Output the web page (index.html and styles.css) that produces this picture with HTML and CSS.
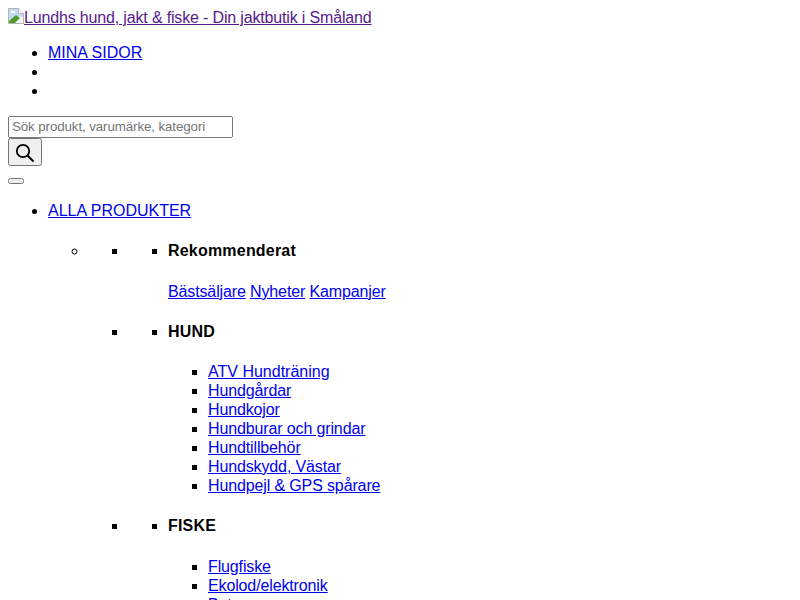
FILE: index.html
```html
<!DOCTYPE html>
<html lang="sv">
<head>
  <meta charset="UTF-8">
  <meta name="viewport" content="width=device-width, initial-scale=1.0">
  <title>Lundhs hund, jakt &amp; fiske</title>
  <link rel="stylesheet" href="styles.css">
</head>
<body>
  <div class="logo">
    <a class="logo-link" href="#logo"><svg class="broken-img" width="16" height="16" viewBox="0 0 16 16"><path d="M0.5 0.5H10.5L15.5 5.5V15.5H0.5Z" fill="#f4f4f4" stroke="#b4b4b4"/><path d="M1 1H10V6H15V9L9 8L1 13Z" fill="#c5daf6"/><path d="M3 3H7V5H3Z" fill="#fff"/><path d="M1 15V13L8 7L12 10L7 15Z" fill="#4f9a2c"/><path d="M10.5 0.5V5.5H15.5" fill="#fff" stroke="#b4b4b4"/></svg>Lundhs hund, jakt &amp; fiske - Din jaktbutik i Småland</a>
  </div>

  <ul class="top-links">
    <li><a class="caps" href="#mina-sidor">MINA SIDOR</a></li>
    <li></li>
    <li></li>
  </ul>

  <form class="search">
    <input class="search-input" type="text" placeholder="Sök produkt, varumärke, kategori">
    <button class="search-btn" type="button">
      <svg width="20" height="20" viewBox="0 0 20 20" fill="none" stroke="#000"><circle cx="8" cy="8" r="6.2" stroke-width="1.8"/><path d="M12.5 12.5L18.5 18.5" stroke-width="2"/></svg>
    </button>
  </form>

  <button class="menu-btn" type="button"></button>

  <ul class="nav">
    <li>
      <a class="caps" href="#alla">ALLA PRODUKTER</a>
      <ul>
        <li>
          <ul>
            <li>
              <ul>
                <li>
                  <h4>Rekommenderat</h4>
                  <a href="#bast">Bästsäljare</a>
                  <a href="#nyheter">Nyheter</a>
                  <a href="#kampanjer">Kampanjer</a>
                </li>
              </ul>
            </li>
            <li>
              <ul>
                <li>
                  <h4>HUND</h4>
                  <ul>
                    <li><a class="caps" href="#atv">ATV Hundträning</a></li>
                    <li><a href="#gardar">Hundgårdar</a></li>
                    <li><a href="#kojor">Hundkojor</a></li>
                    <li><a href="#burar">Hundburar och grindar</a></li>
                    <li><a href="#tillbehor">Hundtillbehör</a></li>
                    <li><a href="#skydd">Hundskydd, Västar</a></li>
                    <li><a href="#pejl">Hundpejl &amp; GPS spårare</a></li>
                  </ul>
                </li>
              </ul>
            </li>
            <li>
              <ul>
                <li>
                  <h4>FISKE</h4>
                  <ul>
                    <li><a href="#flugfiske">Flugfiske</a></li>
                    <li><a href="#ekolod">Ekolod/elektronik</a></li>
                    <li><a href="#betar">Betar</a></li>
                  </ul>
                </li>
              </ul>
            </li>
          </ul>
        </li>
      </ul>
    </li>
  </ul>
</body>
</html>
```

FILE: styles.css
```css
body {
  font-family: "Liberation Sans", Arial, sans-serif;
  font-size: 16px;
  line-height: 19px;
  letter-spacing: -0.13px;
}
a {
  color: #0000ee;
}
.caps {
  letter-spacing: 0;
}
h4 {
  letter-spacing: 0.2px;
}
.logo-link {
  color: #551a8b;
  letter-spacing: -0.16px;
}
.broken-img {
  vertical-align: -1px;
}
.top-links li {
  height: 19px;
}
.search-input {
  display: block;
  width: 225px;
  height: 22px;
  padding: 0 2px 2px;
  box-sizing: border-box;
  font-family: "Liberation Sans", Arial, sans-serif;
  font-size: 13.33px;
  letter-spacing: -0.1px;
}
.search-btn {
  display: block;
  width: 34px;
  height: 28px;
  padding: 0;
}
.search-btn svg {
  display: block;
  margin: 1px auto 0;
}
.menu-btn {
  display: block;
  width: 16px;
  height: 6px;
  margin-top: 12px;
  padding: 0;
}
.nav {
  margin-top: 17px;
}
```
